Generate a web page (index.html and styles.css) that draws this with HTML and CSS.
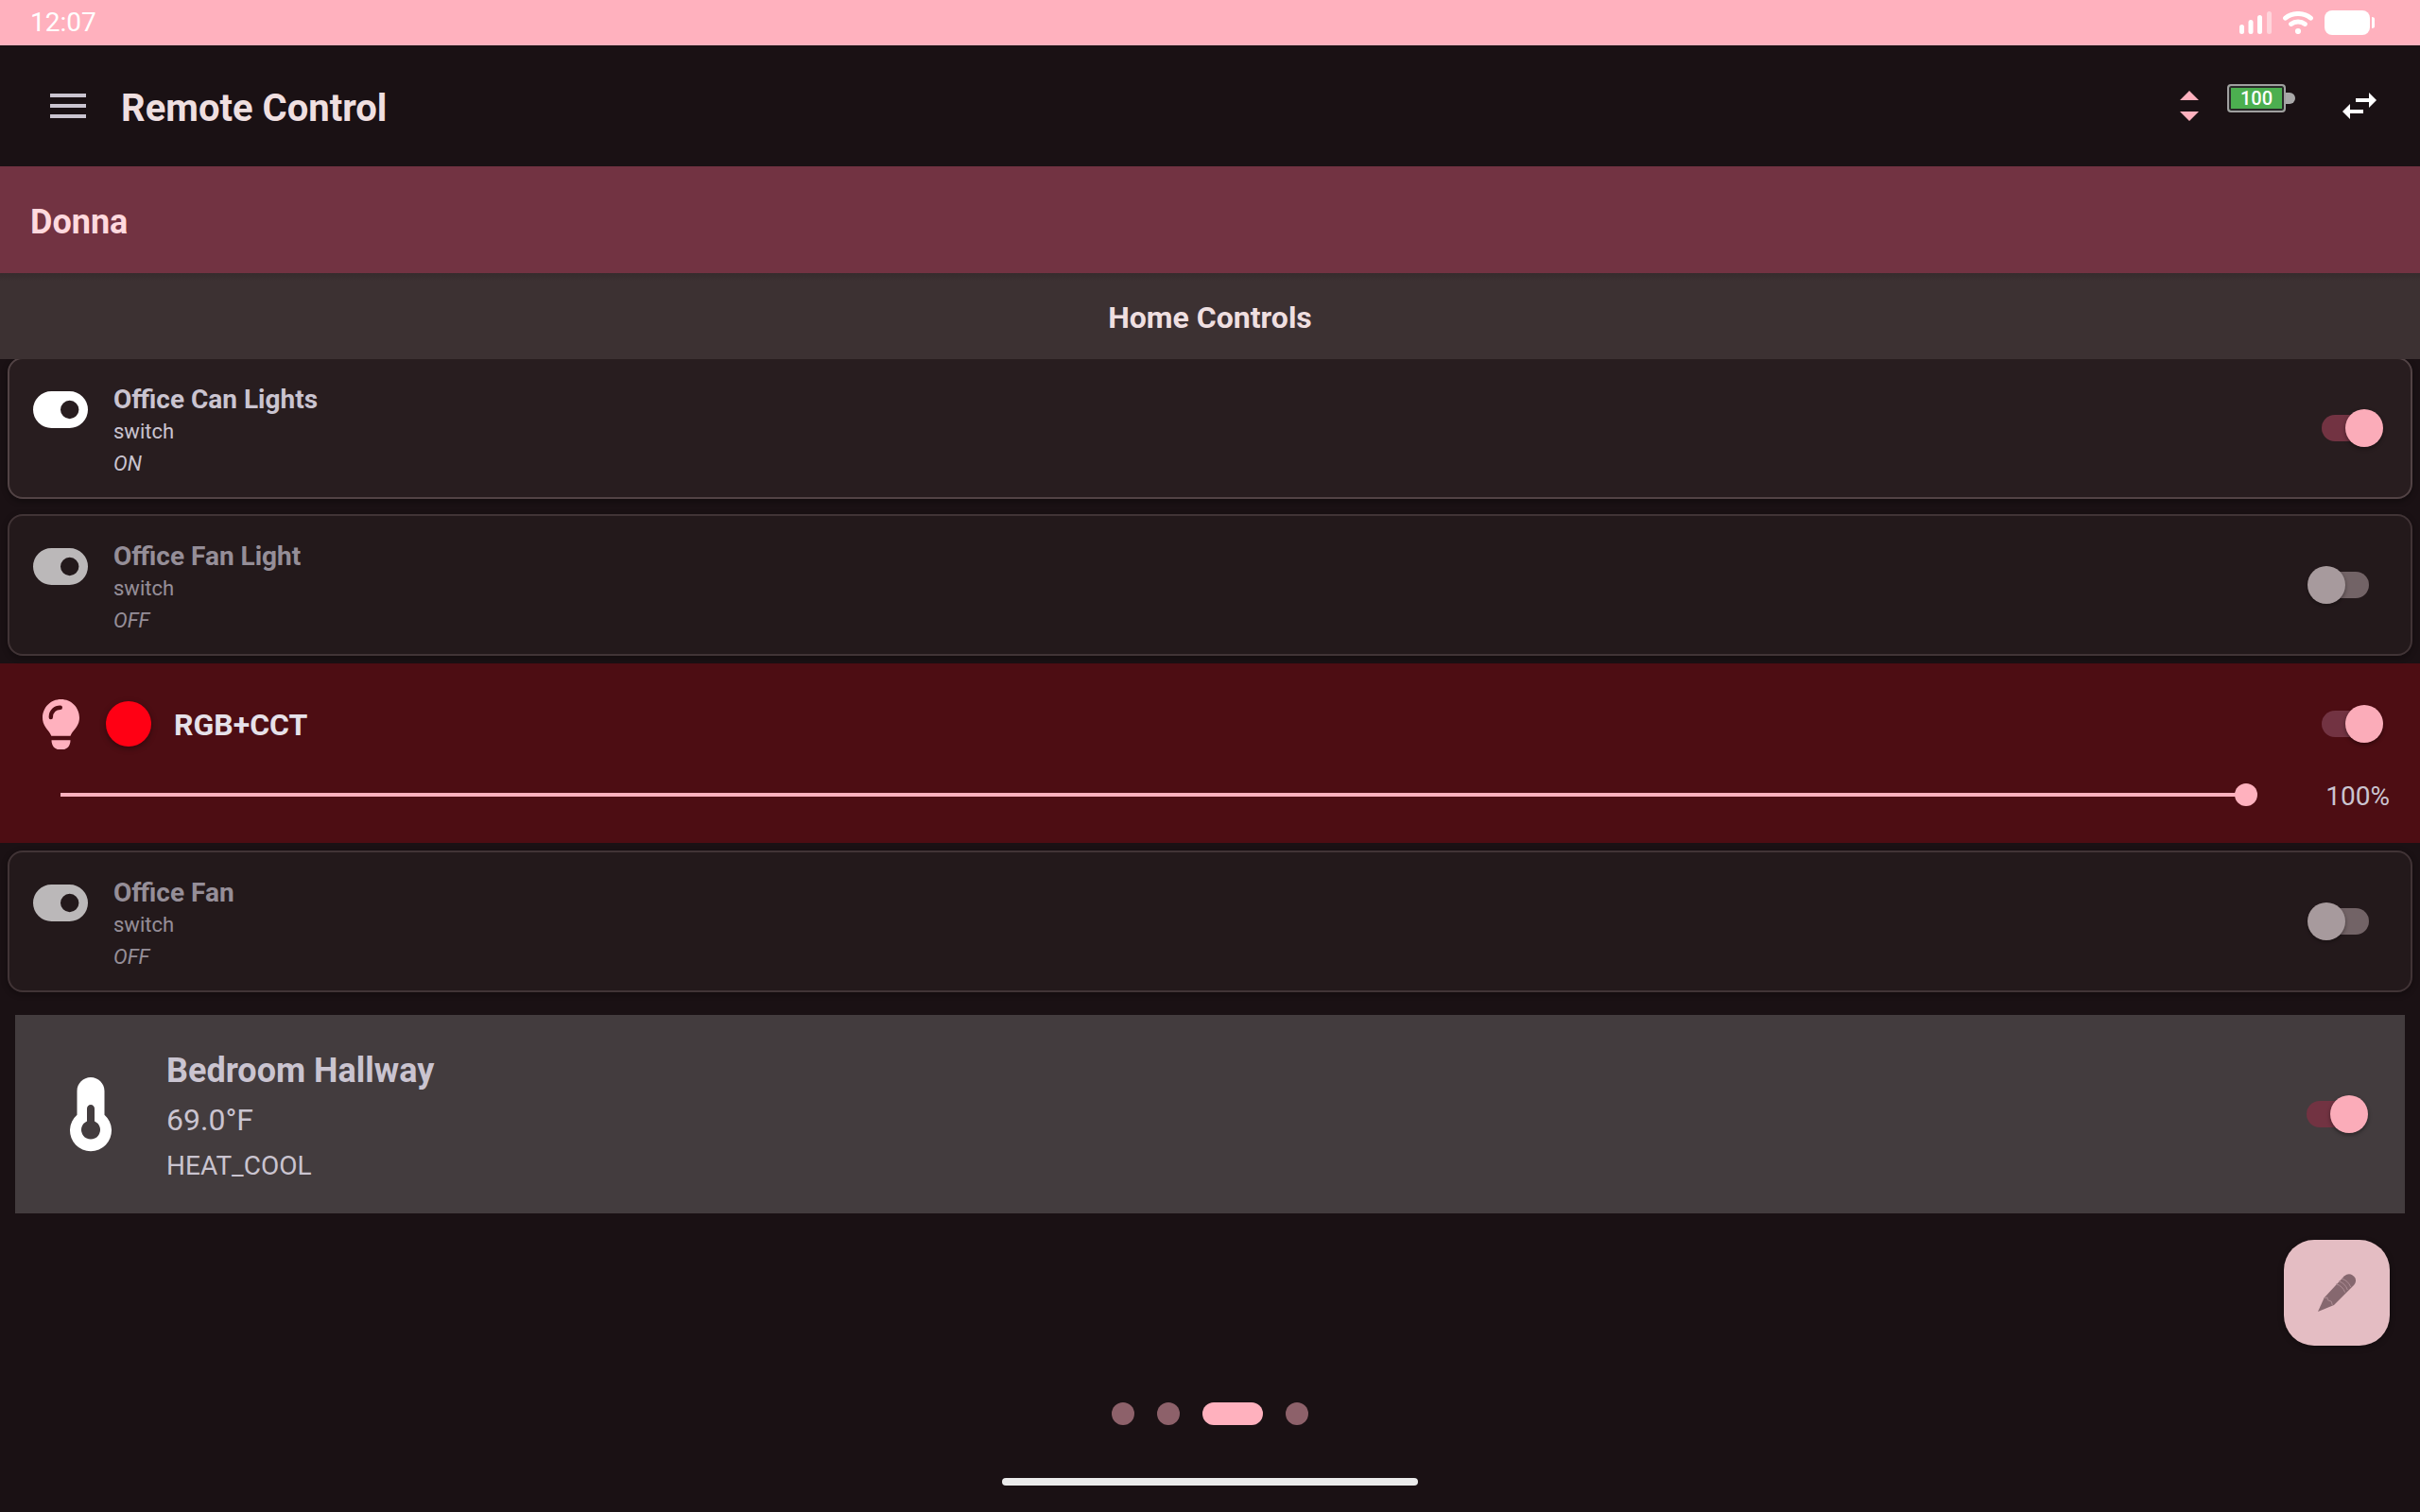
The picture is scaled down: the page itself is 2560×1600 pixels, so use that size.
FILE: index.html
```
<!DOCTYPE html>
<html lang="en">
    <head>
        <meta charset="utf-8">
        <meta name="viewport" content="width=device-width, initial-scale=1">
        <title>Remote Control</title>
        <link rel="stylesheet" href="styles.css">
    </head>
    <body>
        <div class="status">
            <span class="clock">12:07</span>
            <svg class="signal" width="34" height="24" viewBox="0 0 34 24" fill="#fff">
                <rect x="0" y="14" width="5" height="10" rx="2.5"/>
                <rect x="9.5" y="9" width="5" height="15" rx="2.5"/>
                <rect x="19" y="4" width="5" height="20" rx="2.5"/>
                <rect x="29" y="0" width="5" height="24" rx="2.5" opacity=".45"/>
            </svg>
            <svg class="wifi" width="32" height="24" viewBox="0 0 32 24" fill="none" stroke="#fff" stroke-width="5" stroke-linecap="round">
                <path d="M2.6 7.2C10 .9 22 .9 29.4 7.2"/>
                <path d="M8.6 13.4c4.3-3.2 10.5-3.2 14.8 0"/>
                <circle cx="16" cy="21" r="3.1" fill="#fff" stroke="none"/>
            </svg>
            <svg width="54" height="26" viewBox="0 0 54 26" fill="#fff">
                <rect width="48" height="26" rx="8"/>
                <path d="M50 7c4 0 3 3 3 6s1 6-3 6z"/>
            </svg>
        </div>

        <header class="topbar">
            <button class="icon-btn menu" aria-label="Menu">
                <svg width="38" height="26" viewBox="0 0 38 26" fill="#cac4d0"><path d="M0 0h38v4H0zM0 11h38v4H0zM0 22h38v4H0z"/></svg>
            </button>
            <h1>Remote Control</h1>
            <button class="icon-btn" aria-label="Sort">
                <svg width="20" height="32" viewBox="0 0 20 32" fill="#ffb1be"><path d="M0 10 10 0l10 10zM0 22h20L10 32z"/></svg>
            </button>
            <div class="battery"><span>100</span></div>
            <button class="icon-btn" aria-label="Swap device">
                <svg width="48" height="48" viewBox="0 0 24 24" fill="#fff"><path d="M21 9l-4-4v3h-7v2h7v3zM7 11l-4 4 4 4v-3h7v-2H7z"/></svg>
            </button>
        </header>

        <div class="device">Donna</div>
        <h2>Home Controls</h2>

        <main class="list">
            <div class="card">
                <svg width="60" height="60" viewBox="0 0 60 60" fill="#fff"><path fill-rule="evenodd" d="M20.5 10h19a19.5 19.5 0 0 1 0 39h-19a19.5 19.5 0 0 1 0-39zM39.700 19.800a9.700 9.700 0 1 0 0 19.400 9.700 9.700 0 0 0 0-19.400z"/></svg>
                <label class="info" for="canLights">
                    <b>Office Can Lights</b>
                    <span>switch</span>
                    <i>ON</i>
                </label>
                <input class="toggle" type="checkbox" id="canLights" checked>
            </div>

            <div class="card off">
                <svg width="60" height="60" viewBox="0 0 60 60" fill="#fff"><path fill-rule="evenodd" d="M20.5 10h19a19.5 19.5 0 0 1 0 39h-19a19.5 19.5 0 0 1 0-39zM39.700 19.800a9.700 9.700 0 1 0 0 19.400 9.700 9.700 0 0 0 0-19.400z"/></svg>
                <label class="info" for="fanLight">
                    <b>Office Fan Light</b>
                    <span>switch</span>
                    <i>OFF</i>
                </label>
                <input class="toggle" type="checkbox" id="fanLight">
            </div>

            <div class="light">
                <div class="light-row">
                    <svg width="60" height="60" viewBox="0 0 60 60">
                        <path fill="#ffb1be" d="M30.500 4C19.500 4 11 12.700 11 23.500c0 9.500 7 13 9.300 19.300h20.200C42.800 36.500 50 33 50 23.500 50 12.700 41.500 4 30.500 4zM20.500 47.200h20c0 6-3.500 9.800-8 9.800h-4c-4.500 0-8-3.800-8-9.800z"/>
                        <path fill="none" stroke="#4d0d13" stroke-width="4.400" stroke-linecap="round" d="M19.800 23c0-6.500 4.700-10.300 10-10.300"/>
                    </svg>
                    <button class="swatch" aria-label="Colour"></button>
                    <label for="rgb">RGB+CCT</label>
                    <input class="toggle" type="checkbox" id="rgb" checked>
                </div>
                <div class="dim-row">
                    <input class="slider" type="range" min="0" max="100" value="100" aria-label="Brightness">
                    <span>100%</span>
                </div>
            </div>

            <div class="card off">
                <svg width="60" height="60" viewBox="0 0 60 60" fill="#fff"><path fill-rule="evenodd" d="M20.5 10h19a19.5 19.5 0 0 1 0 39h-19a19.5 19.5 0 0 1 0-39zM39.700 19.800a9.700 9.700 0 1 0 0 19.400 9.700 9.700 0 0 0 0-19.400z"/></svg>
                <label class="info" for="fan">
                    <b>Office Fan</b>
                    <span>switch</span>
                    <i>OFF</i>
                </label>
                <input class="toggle" type="checkbox" id="fan">
            </div>

            <div class="climate">
                <svg width="80" height="80" viewBox="0 0 80 80" fill="#fff"><path fill-rule="evenodd" d="M40 1c8 0 14.500 6.500 14.500 14.500v25.200A22 22 0 1 1 25.500 40.700V15.500C25.500 7.500 32 1 40 1zM40 30c-2.200 0-4 1.800-4 4v13.400a10 10 0 1 0 8 0V34c0-2.200-1.800-4-4-4z"/></svg>
                <label class="climate-info" for="hallway">
                    <b>Bedroom Hallway</b>
                    <span class="temp">69.0°F</span>
                    <span class="mode">HEAT_COOL</span>
                </label>
                <input class="toggle" type="checkbox" id="hallway" checked>
            </div>
        </main>

        <button class="fab" aria-label="Edit">
            <svg width="40" height="40" viewBox="0 0 120 120">
                <path fill="#86686f" d="M0 120 20 76 84 7C96-5 112 1 118 13c4 8 2 16-4 23L51 99z"/>
                <path fill="none" stroke="#ad8d94" stroke-width="3" d="M19 77l11-2 1 8 12 5 3 12M58 32q21 7 28 27M66 23q21 7 28 28M75 15q21 6 29 27"/>
            </svg>
        </button>

        <nav class="pager">
            <button aria-label="Page 1"></button>
            <button aria-label="Page 2"></button>
            <button class="current" aria-label="Page 3"></button>
            <button aria-label="Page 4"></button>
        </nav>
        <div class="home-bar"></div>
    </body>
</html>
```

FILE: styles.css
```
*{
    margin: 0;
    padding: 0;
    box-sizing: border-box;
}
body{
    min-height: 100vh;
    display: flex;
    flex-direction: column;
    position: relative;
    background: #1a1114;
    color: #cac4d0;
    font-family: Roboto, sans-serif;
    font-size: 28px;
}
button{
    border: none;
    background: none;
    cursor: pointer;
}
svg{
    display: block;
    flex: none;
}

/* status bar */
.status{
    height: 48px;
    padding: 0 47px 0 32px;
    display: flex;
    align-items: center;
    gap: 12px;
    background: #ffb1be;
    color: #fff;
}
.clock{
    flex: 1;
    padding-bottom: 2px;
}

/* top bar */
.topbar{
    height: 128px;
    padding: 0 40px;
    display: flex;
    align-items: center;
}
.icon-btn{
    display: flex;
    align-items: center;
    justify-content: center;
    width: 48px;
    height: 48px;
}
.menu{
    width: 64px;
}
h1{
    flex: 1;
    padding: 4px 0 0 24px;
    font-size: 40px;
    color: #efdfe0;
}
.battery{
    display: flex;
    align-items: center;
    margin: 0 44px 16px 16px;
}
.battery span{
    width: 62px;
    height: 30px;
    border: 2px solid #a0a0a0;
    border-radius: 4px;
    background: #4caf50;
    box-shadow: inset 0 0 0 2px #2a2a2a;
    color: #fff;
    font-size: 20px;
    font-weight: 500;
    line-height: 26px;
    text-align: center;
}
.battery::after{
    content: "";
    width: 10px;
    height: 12px;
    border-radius: 0 6px 6px 0;
    background: #a9a9a9;
}

.device{
    height: 113px;
    padding: 6px 32px 0;
    line-height: 107px;
    background: #723342;
    color: #ffd9de;
    font-size: 36px;
    font-weight: bold;
}
h2{
    height: 91px;
    padding-top: 4px;
    line-height: 87px;
    background: linear-gradient(#352b2c, #3c3132 8px);
    color: #efdfe0;
    font-size: 32px;
    text-align: center;
}

/* list, scrolled a hair under the heading */
.list{
    flex: 1;
    overflow: hidden;
}
.card{
    display: flex;
    align-items: center;
    margin: 16px 8px 8px;
    padding: 18px 29px 18px 24px;
    border: 2px solid #524345;
    border-radius: 16px;
    background: #281d1f;
    box-shadow: 0 2px 6px rgba(0, 0, 0, 0.4);
}
.card:first-child{
    margin-top: -2px;
}
.card.off{
    opacity: 0.7;
}
.light + .card{
    margin-top: 8px;
}
.card svg{
    align-self: flex-start;
    margin-top: 6px;
}
.info{
    flex: 1;
    display: flex;
    flex-direction: column;
    padding: 6px 0 0 26px;
    font-size: 22px;
    line-height: 34px;
}
.info b{
    padding-top: 2px;
    font-size: 28px;
}

/* switch */
.toggle{
    appearance: none;
    flex: none;
    display: grid;
    align-items: center;
    width: 80px;
    height: 40px;
    cursor: pointer;
}
.toggle::before,
.toggle::after{
    content: "";
    grid-area: 1 / 1;
}
.toggle::before{
    width: 50px;
    height: 28px;
    margin-left: 15px;
    border-radius: 14px;
    background: #988689;
}
.toggle::after{
    width: 40px;
    height: 40px;
    border-radius: 50%;
    background: #e3d5d7;
    box-shadow: 0 2px 4px rgba(0, 0, 0, 0.4);
}
.toggle:checked::before{
    background: #723342;
}
.toggle:checked::after{
    justify-self: end;
    background: #fbacb9;
}

/* colour light */
.light{
    padding: 22px 32px 18px 34px;
    background: #4d0d13;
}
.light-row{
    display: flex;
    align-items: center;
    height: 84px;
    padding-right: 7px;
}
.light-row label{
    flex: 1;
    padding: 2px 0 0 24px;
    color: #e6e1e9;
    font-size: 32px;
    font-weight: bold;
}
.swatch{
    width: 48px;
    height: 48px;
    margin-left: 18px;
    border-radius: 50%;
    background: #ff0014;
    box-shadow: 0 2px 6px rgba(0, 0, 0, 0.4);
}
.dim-row{
    display: flex;
    align-items: center;
    height: 66px;
    padding-left: 18px;
}
.dim-row span{
    width: 140px;
    padding-top: 2px;
    text-align: right;
}
.slider{
    appearance: none;
    flex: 1;
    height: 24px;
    background: linear-gradient(#ffb1be, #ffb1be) center / calc(100% - 24px) 4px no-repeat;
}
.slider::-webkit-slider-thumb{
    appearance: none;
    width: 24px;
    height: 24px;
    border-radius: 50%;
    background: #ffb1be;
}

/* thermostat */
.climate{
    display: flex;
    align-items: center;
    margin: 24px 16px 0;
    padding: 27px 39px 27px 40px;
    background: #433c3e;
}
.climate-info{
    flex: 1;
    display: flex;
    flex-direction: column;
    padding: 6px 0 0 40px;
    line-height: 52px;
}
.climate-info b{
    font-size: 36px;
}
.temp{
    font-size: 32px;
}
.mode{
    line-height: 46px;
}

.fab{
    position: absolute;
    right: 32px;
    bottom: 176px;
    display: flex;
    align-items: center;
    justify-content: center;
    width: 112px;
    height: 112px;
    border-radius: 32px;
    background: #e4bdc3;
    box-shadow: 0 2px 6px rgba(0, 0, 0, 0.3);
}
.pager{
    display: flex;
    justify-content: center;
    gap: 24px;
}
.pager button{
    width: 24px;
    height: 24px;
    border-radius: 12px;
    background: #8d616a;
}
.pager .current{
    width: 64px;
    background: #ffb1be;
}
.home-bar{
    width: 440px;
    height: 8px;
    margin: 56px auto 28px;
    border-radius: 4px;
    background: #ebebeb;
}
```
